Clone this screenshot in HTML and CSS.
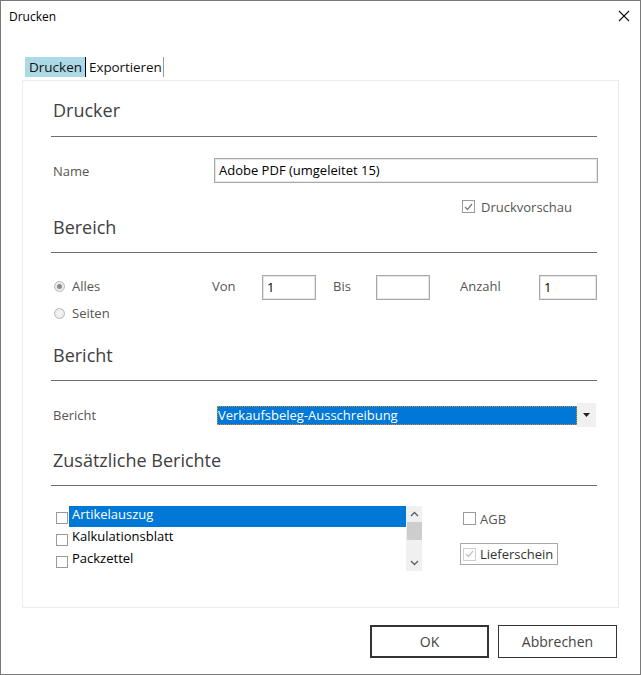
FILE: index.html
```html
<!DOCTYPE html>
<html lang="de">
<head>
<meta charset="utf-8">
<title>Drucken</title>
<link rel="stylesheet" href="styles.css">
</head>
<body>
<div class="window">
  <div class="titlebar">
    <span class="title">Drucken</span>
    <svg class="close" width="12" height="12" viewBox="0 0 12 12"><path d="M1 1 L11 11 M11 1 L1 11" stroke="#111" stroke-width="1.1" fill="none"/></svg>
  </div>
  <div class="tabs">
    <span class="tab active">Drucken</span>
    <span class="tab">Exportieren</span>
  </div>
  <div class="panel">
    <div class="head head-first">Drucker</div>
    <div class="row name-row">
      <span class="label w163">Name</span>
      <div class="input grow">Adobe PDF (umgeleitet 15)</div>
    </div>
    <div class="row preview-row">
      <span class="check checked"><svg width="9" height="8" viewBox="0 0 9 8"><path d="M1 4 L3.5 6.5 L8 1" stroke="#7a7a7a" stroke-width="1.2" fill="none"/></svg></span>
      <span class="label">Druckvorschau</span>
    </div>

    <div class="head">Bereich</div>
    <div class="row range-row">
      <div class="radio-col">
        <div class="radio-item"><span class="radio on"></span><span class="label">Alles</span></div>
      </div>
      <span class="label w50 up">Von</span>
      <div class="input w54">1</div>
      <span class="label w43 ml17 up">Bis</span>
      <div class="input w54"></div>
      <span class="label w79 ml30 up">Anzahl</span>
      <div class="input w58">1</div>
    </div>
    <div class="row radio2-row">
      <div class="radio-item"><span class="radio"></span><span class="label">Seiten</span></div>
    </div>

    <div class="head head-report">Bericht</div>
    <div class="row report-row">
      <span class="label w166">Bericht</span>
      <div class="select">
        <div class="select-value">Verkaufsbeleg-Ausschreibung</div>
        <div class="select-arrow"><svg width="7" height="4" viewBox="0 0 7 4"><path d="M0 0 H7 L3.5 4 Z" fill="#222"/></svg></div>
      </div>
    </div>

    <div class="head head-extra">Zusätzliche Berichte</div>
    <div class="row extra-row">
      <div class="list">
        <div class="list-items">
          <div class="list-item"><span class="check"></span><span class="item-text selected">Artikelauszug</span></div>
          <div class="list-item"><span class="check"></span><span class="item-text">Kalkulationsblatt</span></div>
          <div class="list-item"><span class="check"></span><span class="item-text">Packzettel</span></div>
        </div>
        <div class="scrollbar">
          <svg class="sb-arrow" width="9" height="6" viewBox="0 0 9 6"><path d="M1 5 L4.5 1.5 L8 5" stroke="#606060" stroke-width="1.4" fill="none"/></svg>
          <div class="thumb"></div>
          <div class="sb-space"></div>
          <svg class="sb-arrow" width="9" height="6" viewBox="0 0 9 6"><path d="M1 1 L4.5 4.5 L8 1" stroke="#606060" stroke-width="1.4" fill="none"/></svg>
        </div>
      </div>
      <div class="extra-right">
        <div class="agb"><span class="check"></span><span class="label">AGB</span></div>
        <div class="liefer"><span class="check disabled"><svg width="9" height="8" viewBox="0 0 9 8"><path d="M1 4 L3.5 6.5 L8 1" stroke="#c4c4c4" stroke-width="1.2" fill="none"/></svg></span><span class="label dark">Lieferschein</span></div>
      </div>
    </div>
  </div>
  <div class="footer">
    <button class="btn btn-default">OK</button>
    <button class="btn">Abbrechen</button>
  </div>
</div>
</body>
</html>
```

FILE: styles.css
```css
* { box-sizing: border-box; }
html, body { margin: 0; padding: 0; background: #fff; }
body { font-family: "Open Sans", "Noto Sans", sans-serif; }

.window {
  width: 641px;
  height: 675px;
  border: 1px solid #7a7a7a;
  background: #fff;
  display: flex;
  flex-direction: column;
}

.titlebar {
  height: 30px;
  display: flex;
  align-items: center;
  justify-content: space-between;
  padding: 0 10px 0 8px;
}
.title { font-size: 12px; color: #000; }

.tabs {
  margin-top: 26px;
  padding-left: 24px;
  display: flex;
  height: 20px;
}
.tab {
  font-size: 13.5px;
  line-height: 20px;
  color: #111;
  padding: 0 3px 0 4px;
  border-right: 1px solid #999;
}
.tab.active {
  background: #add8e6;
  border-right-color: #000;
}
.tab + .tab { padding-left: 3px; padding-right: 1px; letter-spacing: -0.1px; }

.panel {
  margin: 3px 21px 0 21px;
  height: 528px;
  border: 1px solid #ececec;
  padding: 0 20px 0 28px;
  display: flex;
  flex-direction: column;
}

.head {
  font-size: 18px;
  line-height: 24px;
  color: #404040;
  padding: 0 0 13px 2px;
  border-bottom: 1px solid #6e6e6e;
  margin-right: 1px;
}
.head-first { margin-top: 17px; padding-bottom: 14px; }
.head-report { margin-top: 20px; }
.head-extra { margin-top: 21px; }

.row { display: flex; align-items: center; }
.label { font-size: 13px; color: #555; padding-left: 2px; white-space: nowrap; }
.label.dark { color: #333; }
.label.up { margin-top: -3px; }
.w163 { width: 163px; flex: none; }
.w166 { width: 166px; flex: none; }
.w50 { width: 50px; flex: none; padding-left: 0; }
.w43 { width: 43px; flex: none; padding-left: 0; }
.w79 { width: 79px; flex: none; padding-left: 0; }
.ml17 { margin-left: 17px; }
.ml30 { margin-left: 30px; }

.input {
  height: 25px;
  border: 1px solid #a8a8a8;
  box-shadow: inset 0 0 0 1px #e6e6e6;
  font-size: 13px;
  line-height: 23px;
  color: #000;
  padding-left: 4px;
  white-space: nowrap;
}
.grow { flex: 1; }
.w54 { width: 54px; flex: none; }
.w58 { width: 58px; flex: none; }

.name-row { margin-top: 21px; }
.preview-row { margin-top: 15px; height: 17px; padding-left: 411px; }
.preview-row .label { padding-left: 6px; }

.check {
  width: 13px;
  height: 13px;
  border: 1px solid #9a9a9a;
  background: #fff;
  display: inline-flex;
  align-items: center;
  justify-content: center;
  flex: none;
}
.check.disabled { border-color: #cfcfcf; }

.range-row { margin-top: 22px; height: 25px; }
.radio-col { width: 161px; flex: none; margin-top: -3px; }
.radio-item { display: flex; align-items: center; padding-left: 3px; }
.radio-item .label { padding-left: 7px; }
.radio {
  width: 11px;
  height: 11px;
  border-radius: 50%;
  border: 1px solid #b8b8b8;
  background: radial-gradient(circle, #f6f6f6 0, #e4e4e4 100%);
  position: relative;
  flex: none;
}
.radio.on::after {
  content: "";
  position: absolute;
  left: 2px; top: 2px;
  width: 5px; height: 5px;
  border-radius: 50%;
  background: #8a8a8a;
}
.radio2-row { margin-top: 3px; height: 20px; }

.report-row { margin-top: 22px; height: 24px; }
.select { display: flex; align-items: center; width: 379px; height: 24px; }
.select-value {
  width: 360px;
  height: 19px;
  background: #0078d7;
  color: #fff;
  font-size: 13px;
  line-height: 17px;
  border: 1px dotted #e08a2a;
  white-space: nowrap;
}
.select-arrow {
  width: 19px;
  height: 24px;
  background: #f0f0f0;
  display: flex;
  align-items: center;
  justify-content: center;
}

.extra-row { margin-top: 20px; align-items: flex-start; }
.list { display: flex; width: 371px; height: 65px; }
.list-items { width: 355px; }
.list-item { display: flex; align-items: center; height: 21px; padding-left: 5px; }
.list-item .check { width: 12px; height: 12px; margin-top: 3px; }
.list-item + .list-item { height: 22px; }
.item-text {
  flex: 1;
  margin-left: 1px;
  height: 21px;
  font-size: 13px;
  line-height: 17px;
  color: #000;
  padding-left: 3px;
}
.item-text.selected { background: #0078d7; color: #fff; }
.scrollbar {
  width: 16px;
  height: 65px;
  background: #f0f0f0;
  display: flex;
  flex-direction: column;
  align-items: center;
}
.sb-arrow { margin-top: 5px; flex: none; }
.thumb { width: 15px; height: 18px; background: #cdcdcd; margin-top: 5px; flex: none; }
.sb-space { flex: 1; }
.scrollbar .sb-arrow:last-child { margin: 0 0 5px 0; }

.extra-right { margin-left: 38px; display: flex; flex-direction: column; }
.agb { display: flex; align-items: center; margin-top: 6px; padding-left: 3px; height: 13px; }
.agb .label { padding-left: 4px; }
.liefer {
  margin-top: 18px;
  width: 98px;
  height: 22px;
  border: 1px solid #a8a8a8;
  display: flex;
  align-items: center;
  padding-left: 2px;
}
.liefer .label { padding-left: 4px; }

.footer {
  display: flex;
  justify-content: flex-end;
  gap: 9px;
  padding: 17px 23px 0 0;
}
.btn {
  width: 119px;
  height: 33px;
  background: #fff;
  border: 1px solid #333;
  font-family: "Open Sans", "Noto Sans", sans-serif;
  font-size: 14px;
  color: #444;
  padding: 0;
}
.btn-default { border: 2px solid #333; }
```
